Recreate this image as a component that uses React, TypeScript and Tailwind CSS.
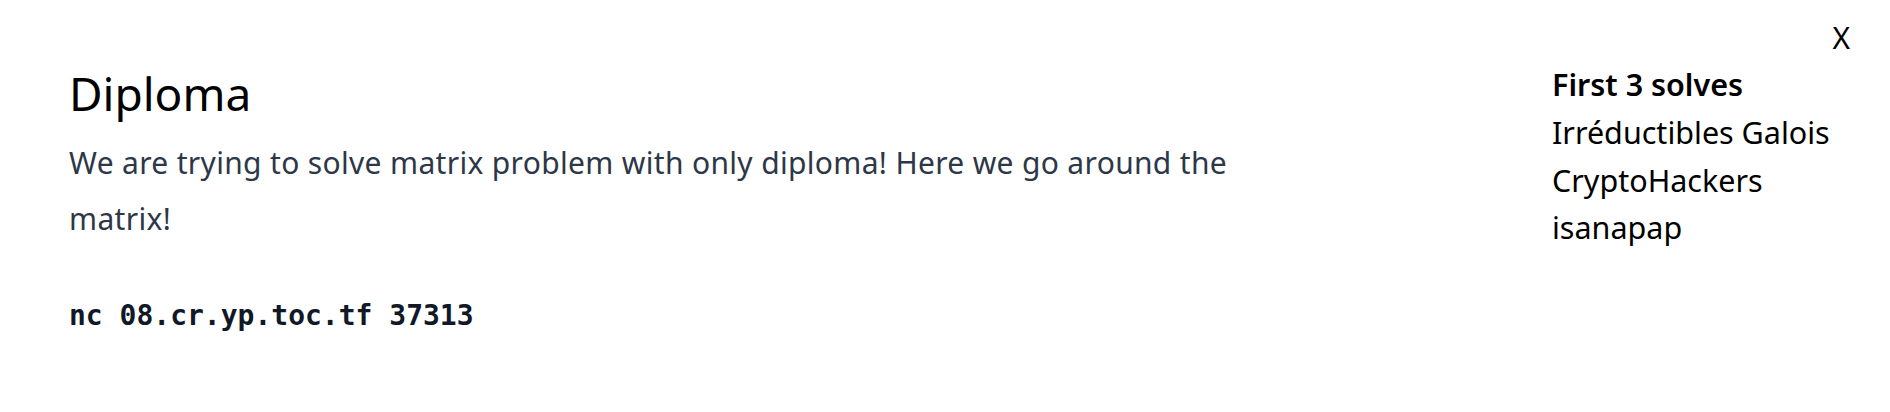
export default function App() {
  const sans = { fontFamily: '"Noto Sans", "Open Sans", sans-serif' };
  return (
    <div className="relative w-full h-[412px] bg-white" style={sans}>
      <button className="absolute top-[18px] right-[40px] text-[30px] leading-[40px] text-black font-normal">
        X
      </button>
      <div className="flex pl-[69px] pr-[40px] pt-[65px]">
        <div className="w-[1250px]">
          <h1 className="text-[46px] leading-[56px] text-black font-normal">Diploma</h1>
          <p className="mt-[14px] text-[30px] leading-[56px] tracking-[0.33px] text-[#2d3748]">
            We are trying to solve matrix problem with only diploma! Here we go around the matrix!
          </p>
          <div
            className="mt-[49px] text-[28px] leading-[40px] font-bold text-[#111827]"
            style={{ fontFamily: '"DejaVu Sans Mono", monospace' }}
          >
            nc 08.cr.yp.toc.tf 37313
          </div>
        </div>
        <div className="ml-auto w-[298px] -mt-[4px] text-[30.5px] leading-[47.8px] text-black">
          <div className="font-semibold">First 3 solves</div>
          <div>Irréductibles Galois</div>
          <div>CryptoHackers</div>
          <div>isanapap</div>
        </div>
      </div>
    </div>
  );
}
